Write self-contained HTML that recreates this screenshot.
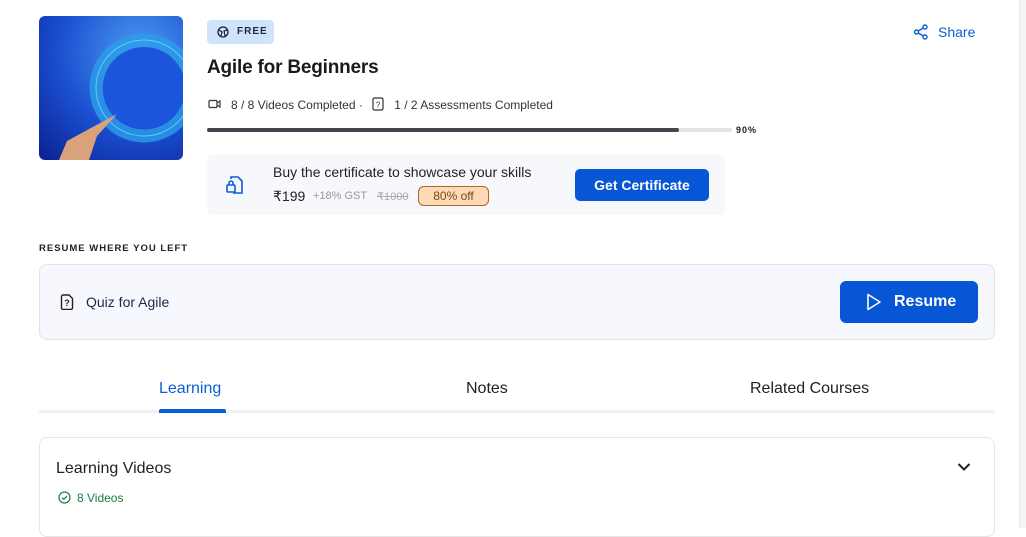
<!DOCTYPE html>
<html><head><meta charset="utf-8"><style>
*{box-sizing:border-box;margin:0;padding:0}
body{width:1026px;height:528px;overflow:hidden;background:#fff;font-family:"Liberation Sans",sans-serif;position:relative;color:#1f1f1f}
.a{position:absolute}
</style></head><body>
<div class="a" style="left:1019px;top:0;width:7px;height:528px;background:#f3f4f6;border-left:1px solid #e8e8ec"></div>
<div class="a" style="left:39px;top:16px;width:144px;height:144px;border-radius:6px;overflow:hidden;background:radial-gradient(circle at 70% 25%,#4a9af0,#1a4fd0 55%,#0b1f90)">
<svg width="144" height="144"><circle cx="105" cy="72" r="48" fill="none" stroke="#2a9ee8" stroke-width="13" opacity=".8"/><circle cx="105" cy="72" r="48" fill="none" stroke="#7fe0ff" stroke-width="1" opacity=".7"/><circle cx="105" cy="72" r="41" fill="#1a55dc"/>
<path d="M20 144 L28 125 L50 113 L78 98 L58 120 L50 144Z" fill="#d9a27a"/></svg></div>
<div class="a" style="left:207px;top:20px;width:67px;height:24px;background:#cfe4fb;border-radius:4px;font-size:10px;font-weight:bold;letter-spacing:1px;line-height:24px;padding-left:30px;color:#1f2937">FREE</div>
<svg class="a" style="left:217px;top:26px" width="12" height="12" viewBox="0 0 12 12"><circle cx="6" cy="6" r="5" fill="none" stroke="#222" stroke-width="1.3"/><path d="M2 4l3 2-1 4M10 4L7 5l1 5" fill="none" stroke="#222" stroke-width="1.2"/></svg>
<div class="a" style="left:207px;top:57px;font-size:19px;font-weight:bold;color:#1a1a1a;letter-spacing:-0.2px">Agile for Beginners</div>
<div class="a" style="left:913px;top:24px;font-size:14px;color:#0b5ed7"><svg width="16" height="16" viewBox="0 0 16 16" style="vertical-align:-3px;margin-right:9px"><circle cx="12" cy="3" r="2" fill="none" stroke="#0b5ed7" stroke-width="1.4"/><circle cx="3.5" cy="8" r="2" fill="none" stroke="#0b5ed7" stroke-width="1.4"/><circle cx="12" cy="13" r="2" fill="none" stroke="#0b5ed7" stroke-width="1.4"/><path d="M5.3 7l5-3M5.3 9l5 3" stroke="#0b5ed7" stroke-width="1.4"/></svg>Share</div>
<div class="a" style="left:208px;top:97px;font-size:12px;color:#333;white-space:nowrap">
<svg width="14" height="10" viewBox="0 0 14 10" style="margin-right:9px"><rect x="1" y="1.5" width="8" height="7" rx="1" fill="none" stroke="#333" stroke-width="1.2"/><path d="M9 4l3-2v6l-3-2" fill="none" stroke="#333" stroke-width="1.2"/></svg>8 / 8 Videos Completed · <svg width="12" height="14" viewBox="0 0 12 14" style="vertical-align:-2px;margin:0 10px 0 6px"><rect x="1" y="1" width="10" height="12" rx="1.5" fill="none" stroke="#333" stroke-width="1.2"/><text x="6" y="10.5" font-size="8" text-anchor="middle" fill="#333">?</text></svg>1 / 2 Assessments Completed</div>
<div class="a" style="left:207px;top:128px;width:525px;height:4px;background:#e3e3e6;border-radius:2px"><div style="width:472px;height:4px;background:#45464d;border-radius:2px"></div></div>
<div class="a" style="left:736px;top:125px;font-size:9px;font-weight:bold;letter-spacing:1px">90%</div>
<div class="a" style="left:207px;top:154px;width:518px;height:61px;background:#f7f8fc;border-radius:6px"></div>
<svg class="a" style="left:226px;top:175px" width="18" height="20" viewBox="0 0 18 20"><path d="M5 4V2h7l4 4v12H7" fill="none" stroke="#0b5ed7" stroke-width="1.6"/><rect x="1" y="10" width="8" height="7" rx="1" fill="none" stroke="#0b5ed7" stroke-width="1.6"/><path d="M3 10V8a2 2 0 014 0v2" fill="none" stroke="#0b5ed7" stroke-width="1.6"/></svg>
<div class="a" style="left:273px;top:164px;font-size:14px;color:#222">Buy the certificate to showcase your skills</div>
<div class="a" style="left:273px;top:188px;font-size:14px;color:#222;white-space:nowrap">₹199</div>
<div class="a" style="left:313px;top:190px;font-size:11px;color:#999;white-space:nowrap">+18% GST</div>
<div class="a" style="left:377px;top:190px;font-size:11px;color:#aaa;text-decoration:line-through;white-space:nowrap">₹1000</div>
<div class="a" style="left:418px;top:186px;width:71px;height:20px;background:#fdd9b5;border:1px solid #a66a2a;border-radius:6px;font-size:12px;text-align:center;line-height:18px;color:#7a4a15">80% off</div>
<div class="a" style="left:575px;top:169px;width:134px;height:32px;background:#0656d6;border-radius:5px;color:#fff;font-weight:bold;font-size:14px;text-align:center;line-height:32px">Get Certificate</div>
<div class="a" style="left:39px;top:243px;font-size:9.5px;font-weight:bold;letter-spacing:1px;color:#222">RESUME WHERE YOU LEFT</div>
<div class="a" style="left:39px;top:264px;width:956px;height:76px;background:#f7f8fd;border:1px solid #e2e4ea;border-radius:8px"></div>
<svg class="a" style="left:60px;top:294px" width="14" height="16" viewBox="0 0 14 16"><path d="M1.5 2.5a1.5 1.5 0 011.5-1.5h6l3.5 3.5v9.5a1.5 1.5 0 01-1.5 1.5H3a1.5 1.5 0 01-1.5-1.5z" fill="none" stroke="#222" stroke-width="1.4"/><text x="7" y="12" font-size="9" font-weight="bold" text-anchor="middle" fill="#222">?</text></svg>
<div class="a" style="left:86px;top:294px;font-size:14px;color:#1c2a4a">Quiz for Agile</div>
<div class="a" style="left:840px;top:281px;width:138px;height:42px;background:#0656d6;border-radius:6px;color:#fff;font-weight:bold;font-size:16px;line-height:42px;padding-left:54px">Resume</div>
<svg class="a" style="left:866px;top:293px" width="16" height="18" viewBox="0 0 16 18"><path d="M2 1.5v15l12-7.5z" fill="none" stroke="#fff" stroke-width="1.6" stroke-linejoin="round"/></svg>
<div class="a" style="left:159px;top:380px;font-size:16px;color:#0b5ed7">Learning</div>
<div class="a" style="left:466px;top:380px;font-size:16px;color:#222">Notes</div>
<div class="a" style="left:750px;top:380px;font-size:16px;color:#222">Related Courses</div>
<div class="a" style="left:39px;top:410px;width:956px;height:3px;background:#f0f1f3"></div>
<div class="a" style="left:159px;top:409px;width:67px;height:4px;background:#0b5ed7;border-radius:2px 2px 0 0"></div>
<div class="a" style="left:39px;top:437px;width:956px;height:100px;border:1px solid #e4e5e8;border-radius:8px"></div>
<div class="a" style="left:56px;top:460px;font-size:16px;color:#222">Learning Videos</div>
<svg class="a" style="left:957px;top:462px" width="14" height="10" viewBox="0 0 14 10"><path d="M1.5 2l5.5 5.5L12.5 2" fill="none" stroke="#222" stroke-width="2"/></svg>
<div class="a" style="left:58px;top:491px;font-size:12px;color:#1e7a44"><svg width="13" height="13" viewBox="0 0 13 13" style="vertical-align:-2px;margin-right:6px"><circle cx="6.5" cy="6.5" r="5.5" fill="none" stroke="#1e7a44" stroke-width="1.2"/><path d="M4 6.5l1.8 1.8L9 5" fill="none" stroke="#1e7a44" stroke-width="1.2"/></svg>8 Videos</div>
</body></html>
